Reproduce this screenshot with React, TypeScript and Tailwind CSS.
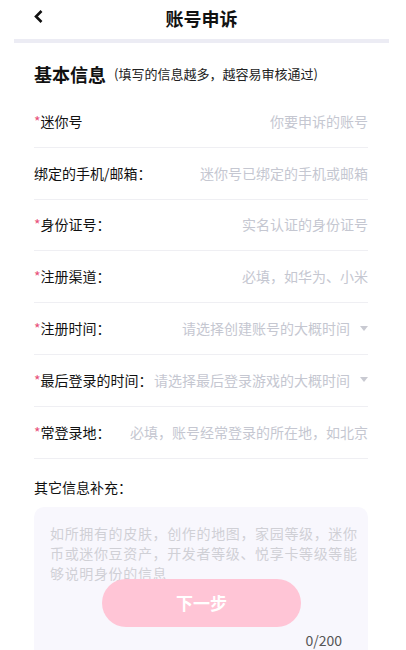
import React from "react";

const Tri = () => (
  <svg width="8" height="6" viewBox="0 0 8 6" className="ml-[10px] shrink-0">
    <polygon points="0,0 8,0 4,5" fill="#c9cad2" />
  </svg>
);

type Row = { label: string; req: boolean; ph: string; drop?: boolean };

const rows: Row[] = [
  { label: "迷你号", req: true, ph: "你要申诉的账号" },
  { label: "绑定的手机/邮箱：", req: false, ph: "迷你号已绑定的手机或邮箱" },
  { label: "身份证号：", req: true, ph: "实名认证的身份证号" },
  { label: "注册渠道：", req: true, ph: "必填，如华为、小米" },
  { label: "注册时间：", req: true, ph: "请选择创建账号的大概时间", drop: true },
  { label: "最后登录的时间：", req: true, ph: "请选择最后登录游戏的大概时间", drop: true },
  { label: "常登录地：", req: true, ph: "必填，账号经常登录的所在地，如北京" },
];

export default function App() {
  return (
    <div className="relative w-[406px] h-[650px] overflow-hidden bg-white font-['Noto_Sans_CJK_SC',sans-serif] text-[#111]">
      <div className="relative flex h-[39px] items-center justify-center">
        <svg
          width="9"
          height="13"
          viewBox="0 0 9 13"
          className="absolute left-[34px] top-[10px]"
        >
          <polyline
            points="7.5,1 2,6.5 7.5,12"
            fill="none"
            stroke="#111"
            strokeWidth="2.6"
          />
        </svg>
        <span className="text-[18px] font-bold leading-none mt-[-4px] mr-[3px]">账号申诉</span>
      </div>
      <div className="ml-[14px] mr-[17px] h-[4px] bg-[#ececf4]" />

      <div className="pl-[34px] pr-[38px]">
        <div className="mt-[19px] flex items-center h-[24px]">
          <span className="text-[18px] font-bold leading-[24px]">基本信息</span>
          <span className="ml-[8px] text-[13px] leading-[24px] text-[#222]">
            (填写的信息越多，越容易审核通过)
          </span>
        </div>

        <div className="mt-[10px]">
          {rows.map((r) => (
            <div
              key={r.label}
              className="flex h-[51.8px] items-center justify-between border-b border-[#efeff3] text-[14px]"
            >
              <span className="shrink-0 whitespace-nowrap">
                {r.req && <span className="text-[#e8507a]">*</span>}
                {r.label}
              </span>
              <span className="flex items-center whitespace-nowrap text-[#c5c7d1]">
                {r.ph}
                {r.drop && <Tri />}
              </span>
            </div>
          ))}
        </div>

        <div className="mt-[18px] text-[14px] leading-[20px]">其它信息补充：</div>

        <div className="mt-[10px] h-[200px] rounded-[10px] bg-[#f8f7fd] px-[16px] pt-[16px]">
          <div className="whitespace-nowrap text-[14px] tracking-[0.65px] leading-[20px] text-[#d0d0d6]">
            如所拥有的皮肤，创作的地图，家园等级，迷你
            <br />
            币或迷你豆资产，开发者等级、悦享卡等级等能
            <br />
            够说明身份的信息
          </div>
          <div className="mt-[47px] pr-[10px] text-right text-[14px] leading-[20px] text-[#555]">
            0/200
          </div>
        </div>
      </div>

      <button className="absolute left-[102px] top-[579px] flex h-[48px] w-[199px] items-center justify-center rounded-full bg-[#ffc5d6] text-[17px] font-bold text-white">
        下一步
      </button>
    </div>
  );
}
